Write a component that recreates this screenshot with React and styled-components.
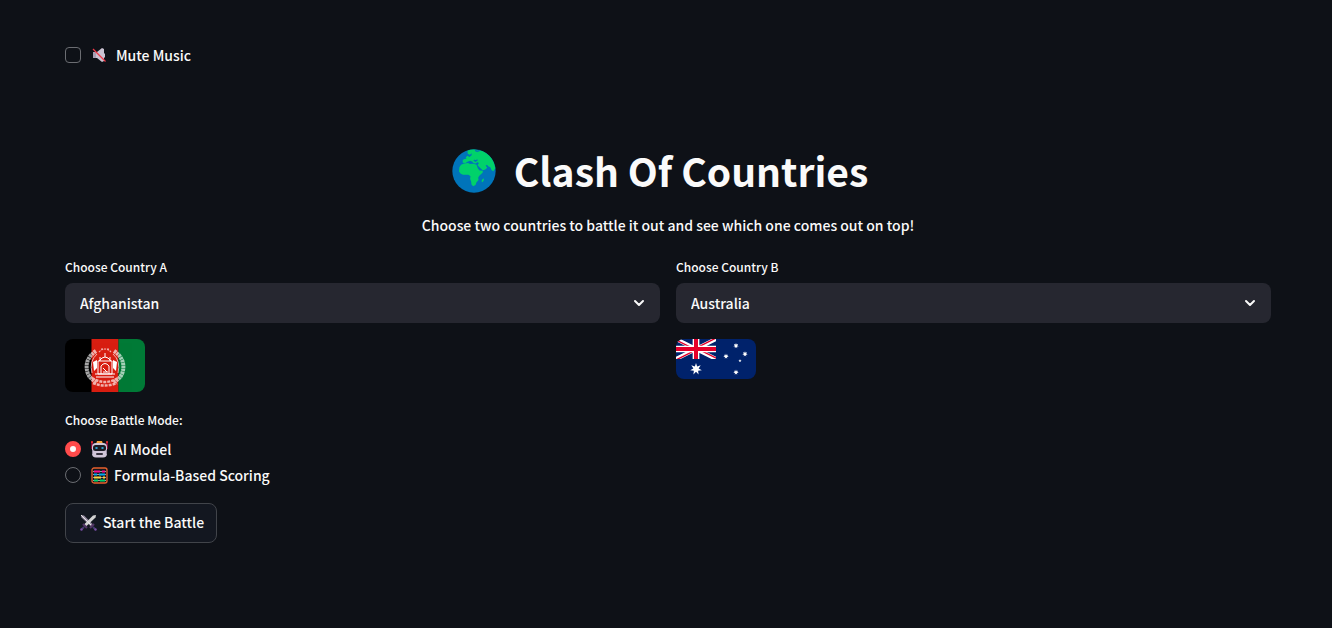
import React, { useState } from "react";
import styled, { createGlobalStyle } from "styled-components";

const GlobalStyle = createGlobalStyle`
  *, *::before, *::after { box-sizing: border-box; }
  body {
    margin: 0;
    background: #0e1117;
    color: #fafafa;
    font-family: "Source Sans Pro", "Noto Sans CJK JP", "Noto Sans", sans-serif;
    font-size: 14px;
    font-weight: 500;
    line-height: 24px;
  }
`;

const Page = styled.main`
  padding: 43px 61px 80px 65px;
`;

const OptionLabel = styled.label`
  display: flex;
  align-items: center;
  gap: ${(p) => p.$gap || 6}px;
  width: fit-content;
  height: ${(p) => p.$height || 26}px;
  cursor: pointer;
`;

const Checkbox = styled.input`
  appearance: none;
  width: 16px;
  height: 16px;
  margin: 0 2px 0 0;
  border: 1px solid #6b6d72;
  border-radius: 4px;
  &:checked { background: #ff4b4b; border-color: #ff4b4b; }
`;

const Radio = styled.input`
  appearance: none;
  width: 16px;
  height: 16px;
  margin: 0 4px 0 0;
  border: 1px solid #6b6d72;
  border-radius: 50%;
  &:checked { border: 5px solid #ff4b4b; background: #fafafa; }
`;

const Icon = styled.svg`
  flex: none;
  display: block;
  width: ${(p) => p.$size || 17}px;
  height: ${(p) => p.$size || 17}px;
`;

const Title = styled.h1`
  display: flex;
  align-items: center;
  justify-content: center;
  gap: 18px;
  margin: 77px 0 16px;
  padding-right: 16px;
  font-size: 39px;
  font-weight: 700;
  line-height: 53px;
`;

const Subtitle = styled.p`
  margin: 0;
  text-align: center;
`;

const Columns = styled.div`
  display: grid;
  grid-template-columns: 1fr 1fr;
  gap: 16px;
  margin-top: 20px;
`;

const FieldLabel = styled.label`
  display: block;
  font-size: 12px;
  line-height: 20px;
`;

const SelectBox = styled.div`
  display: grid;
  align-items: center;
  margin: 6px 0 16px;
  & > * { grid-area: 1 / 1; }
  & > svg { justify-self: end; margin-right: 13px; pointer-events: none; }
`;

const Select = styled.select`
  appearance: none;
  width: 100%;
  height: 40px;
  padding: 0 40px 0 15px;
  border: 0;
  border-radius: 8px;
  background: #262730;
  color: inherit;
  font: inherit;
`;

const Flag = styled.svg`
  display: block;
  width: 80px;
  height: ${(p) => p.$height}px;
  border-radius: 8px;
`;

const Modes = styled.fieldset`
  margin: 18px 0 15px;
  padding: 0;
  border: 0;
`;

const Legend = styled.legend`
  padding: 0 0 6px;
  font-size: 12px;
  line-height: 20px;
`;

const Button = styled.button`
  display: flex;
  align-items: center;
  gap: 6px;
  height: 40px;
  padding: 0 12px 2px 14px;
  border: 1px solid #41444a;
  border-radius: 8px;
  background: #131720;
  color: inherit;
  font: inherit;
  cursor: pointer;
`;

function MuteIcon() {
  return (
    <Icon viewBox="0 0 17 17" aria-hidden="true">
      <path d="M2 5h4l5-4 2 1v4l1 1v3l-1 1v3l-2 1-5-4H2z" fill="#cbc3d2" />
      <path d="M2 5h3v6H2z" fill="#a99fb4" />
      <path d="M2 2l12.500 12.500" stroke="#f13a48" strokeWidth="1.300" />
    </Icon>
  );
}

function GlobeIcon() {
  return (
    <Icon $size={44} viewBox="-1 -1 131 131" aria-hidden="true">
      <circle cx="64.500" cy="64.500" r="64.500" fill="#0074ba" />
      <g fill="#00d26a">
        <path d="M45 4Q57-1 70 1Q91 2 109 18Q124 32 128 56L122 65L117 62L113 53L107 50L103 46L99 49L104 55L98 60L91 62L84 56L78 50L75 47L79 42L76 38L69 42L63 41L60 37L53 34L45 37L39 41L31 40L31 32L36 29L42 28L40 24L45 19L51 23L57 18L58 12L52 16L46 13Z" />
        <path d="M21 53L26 46L35 42L47 41L52 44L62 43L72 46L76 57L81 63L91 64L90 70L81 78L77 84L78 91L72 98L69 106L62 110L57 105L56 96L53 88L54 80L48 76L32 76L25 73L20 66Z" />
        <path d="M88 91l5-5 1 5-4 7-3-2z" />
      </g>
      <path d="M68 3l6 3 8-3M64 32l5 3 6-4" fill="none" stroke="#0074ba" strokeWidth="4" />
    </Icon>
  );
}

function RobotIcon() {
  return (
    <Icon viewBox="0 0 17 17" aria-hidden="true">
      <path d="M1 1v7M16 1v7" stroke="#ca0b4a" strokeWidth="1.300" />
      <circle cx="1" cy="1" r="1" fill="#f8312f" />
      <circle cx="16" cy="1" r="1" fill="#f8312f" />
      <path d="M6 0h5l1 3H5z" fill="#f9a33b" />
      <rect x="1" y="2" width="15" height="14.500" rx="4" fill="#d0c5d8" />
      <path d="M1 9h1v4H1zM15 9h1v4h-1z" fill="#998ea4" />
      <rect x="2" y="4" width="13" height="6" rx="2.500" fill="#1c1c24" />
      <path d="M4.500 6h2v2h-2zM10.500 6h2v2h-2z" fill="#2a9cc8" />
      <rect x="5" y="12" width="7" height="2" rx="1" fill="#35303d" />
    </Icon>
  );
}

function AbacusIcon() {
  return (
    <Icon viewBox="0 0 17 17" aria-hidden="true">
      <rect x="1" y="1" width="15" height="15" rx="2" fill="#15171d" stroke="#e8602d" strokeWidth="1.300" />
      <path d="M2 4.500h13M2 7.500h13M2 10.500h13M2 13.500h13" stroke="#9b9b9b" strokeWidth="1" />
      <path d="M3 4.500h6M11 4.500h3" stroke="#f70a8d" strokeWidth="2" />
      <path d="M3 7.500h3M8 7.500h6" stroke="#00a6ed" strokeWidth="2" />
      <path d="M3 10.500h7M12 10.500h2" stroke="#fcd53f" strokeWidth="2" />
      <path d="M3 13.500h4M9 13.500h5" stroke="#00d26a" strokeWidth="2" />
    </Icon>
  );
}

function SwordsIcon() {
  return (
    <Icon viewBox="0 0 17 17" aria-hidden="true">
      <path d="M1 1l3 .5 9 9-2 2-9.500-9z" fill="#998ea4" />
      <path d="M16 1l-3 .5-9 9 2 2 9.500-9z" fill="#d3d3d3" />
      <path d="M1 1l11 11" stroke="#e6e6e6" strokeWidth="1" />
      <path d="M3 10l4 4M14 10l-4 4" stroke="#533566" strokeWidth="2.200" />
      <path d="M4 13l-2 2M13 13l2 2" stroke="#433b6b" strokeWidth="2" />
      <circle cx="1.500" cy="15.500" r="1.200" fill="#7d4faa" />
      <circle cx="15.500" cy="15.500" r="1.200" fill="#7d4faa" />
    </Icon>
  );
}

function Chevron() {
  return (
    <Icon $size={16} viewBox="0 0 16 16" aria-hidden="true">
      <path d="M4 6l4 4 4-4" fill="none" stroke="#fafafa" strokeWidth="2" strokeLinecap="round" strokeLinejoin="round" />
    </Icon>
  );
}

function AfghanFlag() {
  return (
    <Flag $height={53} viewBox="0 0 80 53" role="img" aria-label="Flag of Afghanistan">
      <path d="M0 0h27v53H0z" />
      <path d="M26.500 0h27v53h-27z" fill="#d81e11" />
      <path d="M53.500 0H80v53H53.500z" fill="#007a36" />
      <g fill="none" stroke="#fff">
        <g opacity=".65">
          <path d="M31 12Q18 21 23 35Q26 41 32 43M49 12Q62 21 57 35Q54 41 48 43" strokeWidth="4" strokeDasharray="2.500 .5" />
          <path d="M32 15Q24 22 27 34M48 15Q56 22 53 34" strokeWidth="1" />
          <path d="M27 39Q40 47 53 39M28 44Q40 49 52 44" strokeWidth="2.500" strokeDasharray="3 1" />
          <path d="M34 13Q40 7 46 13M36 10h8" strokeWidth="1.200" strokeDasharray="2 1" />
        </g>
        <path d="M33 35V22h14v13zM36 35v-8q4-5 8 0v8M34 22q6-8 12 0M40 14v4M30 35h20M31 38h18M35 18v4M45 18v4" strokeWidth="1" />
        <path d="M38 29l4 4M38 33h5" strokeWidth="1" />
      </g>
      <path d="M28 23l4-2v8l-3 3zM52 23l-4-2v8l3 3z" fill="#fff" />
    </Flag>
  );
}

function starPoints(cx, cy, outer, inner, count) {
  return Array.from({ length: count * 2 }, (_, i) => {
    const r = i % 2 ? inner : outer;
    const a = (Math.PI * i) / count - Math.PI / 2;
    return `${cx + r * Math.cos(a)},${cy + r * Math.sin(a)}`;
  }).join(" ");
}

function AustralianFlag() {
  return (
    <Flag $height={40} viewBox="0 0 80 40" role="img" aria-label="Flag of Australia">
      <path d="M0 0h80v40H0z" fill="#00226b" />
      <svg width="40" height="20" viewBox="0 0 40 20">
        <path d="M0 0l40 20M40 0L0 20" stroke="#fff" strokeWidth="4" />
        <path d="M-.5 .7l20 10M40.500 19.300l-20-10M39.500-.7l-20 10M.5 20.700l20-10" stroke="#e4002b" strokeWidth="1.400" />
        <path d="M20 0v20M0 10h40" stroke="#fff" strokeWidth="6.700" />
        <path d="M20 0v20M0 10h40" stroke="#e4002b" strokeWidth="4" />
      </svg>
      <g fill="#fff">
        <polygon points={starPoints(20, 30, 6, 2.7, 7)} />
        <polygon points={starPoints(60, 6.7, 2.8, 1.3, 7)} />
        <polygon points={starPoints(50, 17.3, 2.8, 1.3, 7)} />
        <polygon points={starPoints(69, 15, 2.8, 1.3, 7)} />
        <polygon points={starPoints(60, 33.3, 2.8, 1.3, 7)} />
        <polygon points={starPoints(64, 21.7, 1.7, 0.7, 5)} />
      </g>
    </Flag>
  );
}

const countries = ["Afghanistan", "Australia"];
const flags = { Afghanistan: AfghanFlag, Australia: AustralianFlag };

function CountryField({ id, label, initial }) {
  const [country, setCountry] = useState(initial);
  const CountryFlag = flags[country];
  return (
    <div>
      <FieldLabel htmlFor={id}>{label}</FieldLabel>
      <SelectBox>
        <Select id={id} value={country} onChange={(e) => setCountry(e.target.value)}>
          {countries.map((name) => (
            <option key={name}>{name}</option>
          ))}
        </Select>
        <Chevron />
      </SelectBox>
      <CountryFlag />
    </div>
  );
}

export default function App() {
  return (
    <Page>
      <GlobalStyle />
      <OptionLabel $gap={8} $height={24}>
        <Checkbox type="checkbox" />
        <MuteIcon />
        Mute Music
      </OptionLabel>
      <Title>
        <GlobeIcon />
        Clash Of Countries
      </Title>
      <Subtitle>Choose two countries to battle it out and see which one comes out on top!</Subtitle>
      <Columns>
        <CountryField id="country-a" label="Choose Country A" initial="Afghanistan" />
        <CountryField id="country-b" label="Choose Country B" initial="Australia" />
      </Columns>
      <Modes>
        <Legend>Choose Battle Mode:</Legend>
        <OptionLabel>
          <Radio type="radio" name="mode" defaultChecked />
          <RobotIcon />
          AI Model
        </OptionLabel>
        <OptionLabel>
          <Radio type="radio" name="mode" />
          <AbacusIcon />
          Formula-Based Scoring
        </OptionLabel>
      </Modes>
      <Button type="button">
        <SwordsIcon />
        Start the Battle
      </Button>
    </Page>
  );
}
